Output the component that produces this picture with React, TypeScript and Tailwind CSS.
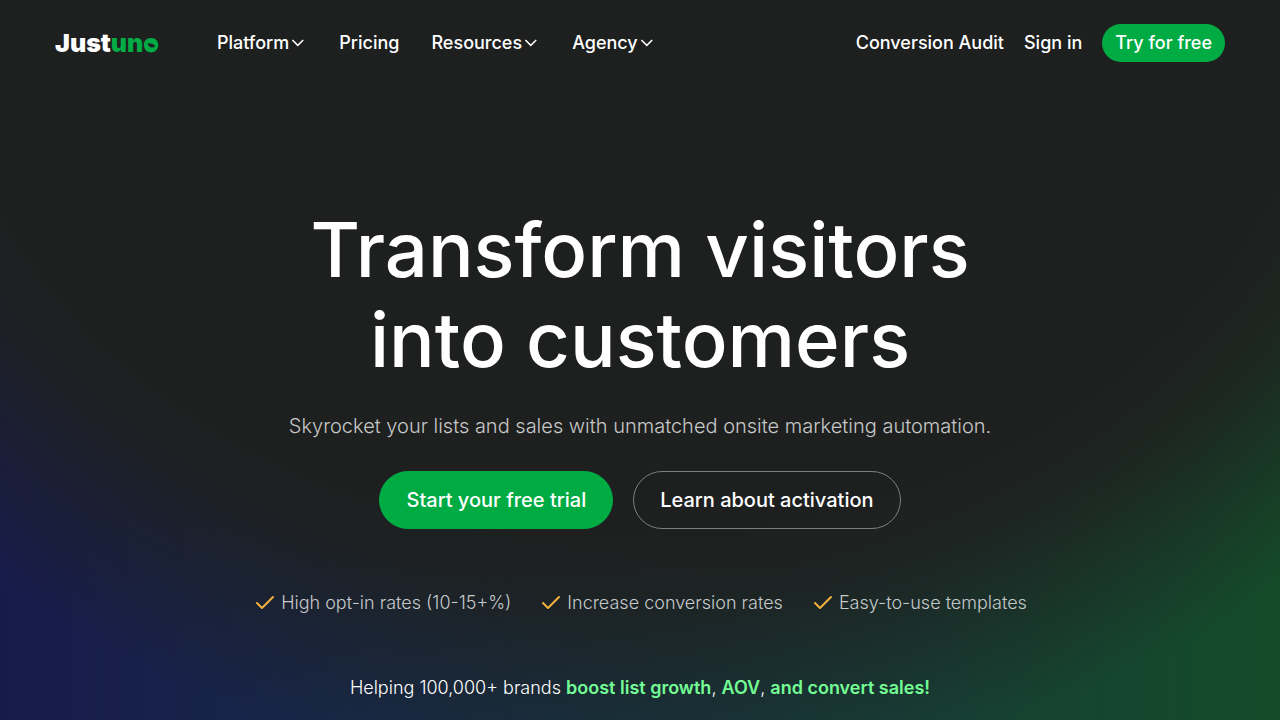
import { FC } from "react";
import { Check } from "lucide-react";

type NavItem = {
  label: string;
  href: string;
  menu?: boolean;
};

const navItems: NavItem[] = [
  { label: "Platform", href: "#platform", menu: true },
  { label: "Pricing", href: "#pricing" },
  { label: "Resources", href: "#resources", menu: true },
  { label: "Agency", href: "#agency", menu: true },
];

const benefits = [
  "High opt-in rates (10-15+%)",
  "Increase conversion rates",
  "Easy-to-use templates",
];

// the last letter is nearly solid, with a small tilted eye in it
const Logo: FC = () => (
  <a href="#home" className="text-[25px] leading-8 font-black text-white">
    Just
    <span className="text-[#00ab44]">
      un
      <span className="relative inline-block">
        o
        <svg
          className="absolute inset-x-0 bottom-[6px] mx-auto"
          width="14"
          height="14"
          viewBox="0 0 14 14"
          aria-hidden="true"
        >
          <circle cx="7" cy="7" r="6.4" fill="#00ab44" />
          <path d="M3.6 4.4C6.4 4 9.6 4.8 11.2 7.2 8.6 9.4 4.6 8.6 3.6 4.4z" fill="#1e201f" />
        </svg>
      </span>
    </span>
  </a>
);

const Chevron: FC = () => (
  <svg
    width="18"
    height="18"
    viewBox="0 0 18 18"
    fill="none"
    stroke="currentColor"
    strokeWidth="1.5"
    aria-hidden="true"
  >
    <path d="M3.4 6l5.4 5.4L14.2 6" />
  </svg>
);

const Header: FC = () => (
  <header className="flex items-center justify-between px-[55px] pt-6 text-lg leading-[26px] font-medium">
    <div className="flex items-center gap-[58px]">
      <Logo />
      <nav className="flex items-center gap-8">
        {navItems.map((item) =>
          item.menu ? (
            <button
              key={item.label}
              type="button"
              className="flex items-center"
            >
              {item.label}
              <Chevron />
            </button>
          ) : (
            <a key={item.label} href={item.href}>
              {item.label}
            </a>
          ),
        )}
      </nav>
    </div>
    <div className="flex items-center gap-5">
      <a href="#audit">Conversion Audit</a>
      <a href="#signin">Sign in</a>
      <a href="#try" className="rounded-full bg-[#00ab44] px-[13px] py-[6px]">
        Try for free
      </a>
    </div>
  </header>
);

const Hero: FC = () => (
  <main className="flex flex-col items-center px-6 pt-[142px] pb-5 text-center">
    <h1 className="text-[76px] leading-[90px] font-medium">
      Transform visitors
      <br />
      into customers
    </h1>
    <p className="mt-[26px] text-xl leading-8 font-light text-[#c6c7c7]">
      Skyrocket your lists and sales with unmatched onsite marketing automation.
    </p>
    <div className="mt-[29px] flex gap-5 text-xl leading-7 font-medium">
      <a
        href="#trial"
        className="rounded-full border border-[#00ab44] bg-[#00ab44] px-[26px] py-[14px]"
      >
        Start your free trial
      </a>
      <a
        href="#activation"
        className="rounded-full border border-[#7d7e7e] px-[26px] py-[14px]"
      >
        Learn about activation
      </a>
    </div>
    <ul className="mt-15 flex gap-7 text-lg leading-7 font-light text-[#c6c9cb]">
      {benefits.map((benefit) => (
        <li key={benefit} className="flex items-center gap-1">
          <Check
            size={24}
            strokeWidth={2}
            className="text-[#f5b13d]"
            aria-hidden="true"
          />
          {benefit}
        </li>
      ))}
    </ul>
    <p className="mt-[57px] text-lg leading-7 font-light">
      Helping 100,000+ brands{" "}
      <strong className="font-semibold text-[#74fc95]">
        boost list growth
      </strong>
      , <strong className="font-semibold text-[#74fc95]">AOV</strong>,{" "}
      <strong className="font-semibold text-[#74fc95]">
        and convert sales!
      </strong>
    </p>
  </main>
);

export default function App() {
  return (
    <div className="min-h-screen bg-[radial-gradient(78%_108%_at_50%_0%,#1e201f_68%,#1e201fdd_76%,#1e201f66_88%,#1e201f00_99%),linear-gradient(90deg,#171b4c_0%,#172a45_33%,#173b38_66%,#144c29_100%)] font-[Inter,sans-serif] text-white">
      <Header />
      <Hero />
    </div>
  );
}
